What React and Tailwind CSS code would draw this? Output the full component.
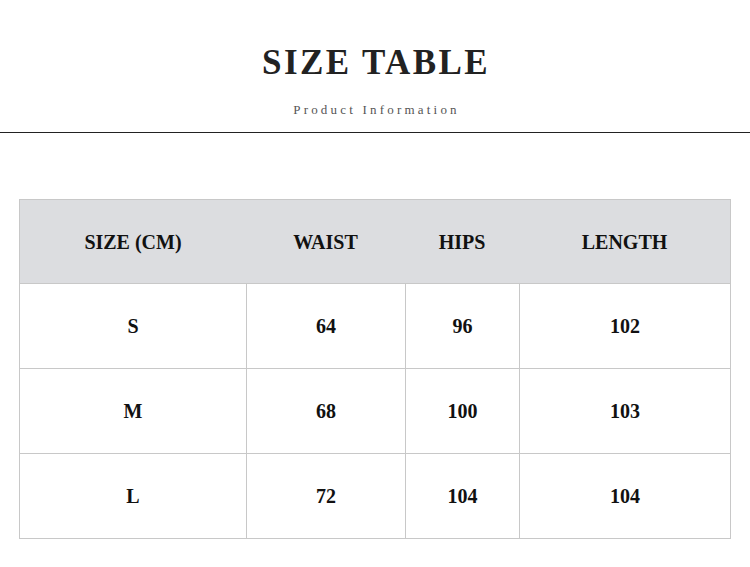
export default function App() {
  const rows = [
    ['S', '64', '96', '102'],
    ['M', '68', '100', '103'],
    ['L', '72', '104', '104'],
  ];

  return (
    <div className="w-[750px] h-[567px] bg-white overflow-hidden" style={{ fontFamily: '"Liberation Serif", serif' }}>
      {/* Heading */}
      <div className="flex flex-col items-center pt-[44px]">
        <h1 className="text-[35px] leading-[38px] font-bold tracking-[2.4px] text-[#222] pl-[2px]">SIZE TABLE</h1>
        <p className="mt-[20px] text-[13px] leading-[16px] tracking-[3.2px] text-[#555] pl-[3px]">Product Information</p>
      </div>
      <div className="mt-[14px] h-px bg-[#222]"></div>

      {/* Table */}
      <div className="mt-[66px] mx-[19px] w-[712px] border border-[#c8c8c8] text-[20px] font-bold text-[#111]">
        <div className="grid grid-cols-[226px_159px_114px_1fr] h-[83px] bg-[#dcdde0] items-center text-center">
          <div>SIZE (CM)</div>
          <div>WAIST</div>
          <div>HIPS</div>
          <div>LENGTH</div>
        </div>
        {rows.map((r, i) => (
          <div key={i} className="grid grid-cols-[226px_159px_114px_1fr] h-[85px] border-t border-[#c8c8c8] text-center">
            {r.map((c, j) => (
              <div key={j} className={`flex items-center justify-center ${j > 0 ? 'border-l border-[#c8c8c8]' : ''}`}>{c}</div>
            ))}
          </div>
        ))}
      </div>
    </div>
  );
}
